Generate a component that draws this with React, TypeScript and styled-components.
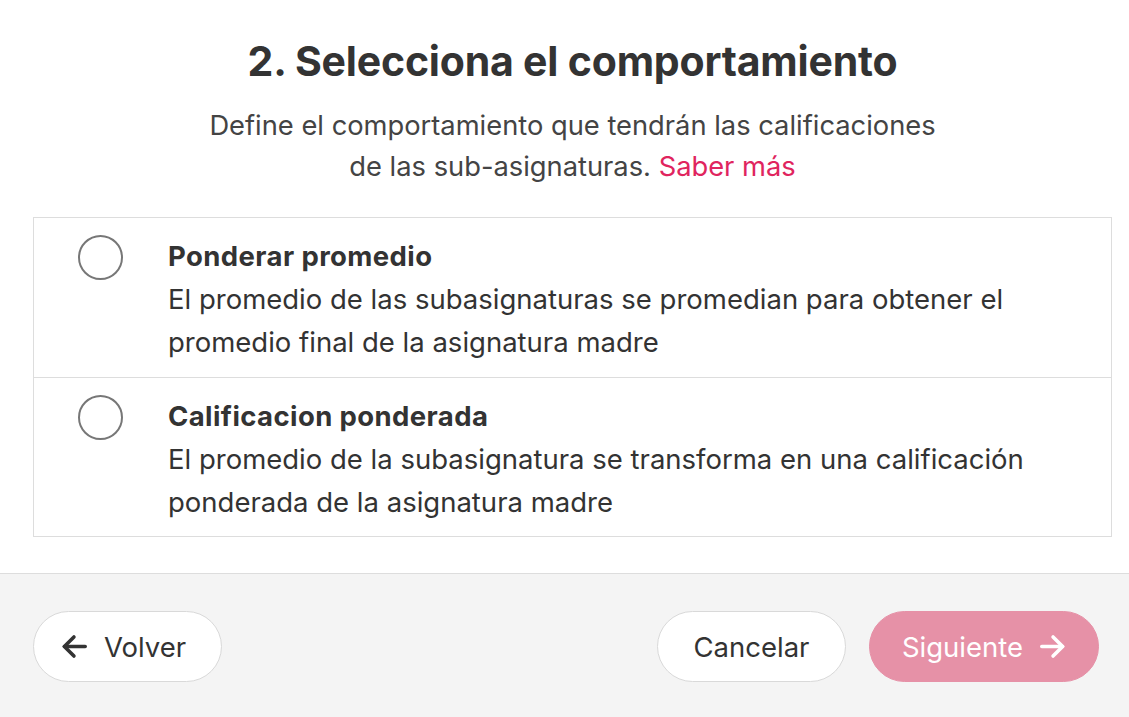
import React from "react";
import styled, { createGlobalStyle } from "styled-components";

const GlobalStyle = createGlobalStyle`
  html, body {
    margin: 0;
    padding: 0;
    background: #ffffff;
  }
  body {
    font-family: Inter, "Noto Sans", "Liberation Sans", sans-serif;
    color: #333333;
  }
`;

const Page = styled.div`
  width: 1129px;
  height: 717px;
  display: flex;
  flex-direction: column;
  background: #ffffff;
  overflow: hidden;
`;

const Content = styled.div`
  display: flex;
  flex-direction: column;
  align-items: center;
  padding: 37px 17px 0 33px;
`;

const Title = styled.h1`
  margin: 0;
  font-size: 41px;
  line-height: 48px;
  font-weight: 700;
  letter-spacing: -0.2px;
  color: #333333;
  text-align: center;
`;

const Subtitle = styled.p`
  margin: 20px 0 0;
  font-size: 27.3px;
  line-height: 41px;
  font-weight: 400;
  color: #444444;
  text-align: center;
`;

const Link = styled.a`
  color: #e0245e;
  text-decoration: none;
  cursor: pointer;
`;

const Options = styled.div`
  align-self: stretch;
  margin-top: 30px;
  border: 1px solid #dddddd;
  display: flex;
  flex-direction: column;
`;

const Option = styled.label`
  display: flex;
  align-items: flex-start;
  height: 159px;
  box-sizing: border-box;
  padding: 17px 24px 0 44px;
  cursor: pointer;
  & + & {
    border-top: 1px solid #dddddd;
  }
`;

const Radio = styled.span`
  flex: none;
  width: 45px;
  height: 45px;
  box-sizing: border-box;
  border: 2.5px solid #777777;
  border-radius: 50%;
  background: #ffffff;
`;

const OptionText = styled.div`
  margin-left: 45px;
  display: flex;
  flex-direction: column;
`;

const OptionTitle = styled.span`
  font-size: 27.5px;
  line-height: 43px;
  font-weight: 700;
  letter-spacing: 0.4px;
  color: #333333;
`;

const OptionDesc = styled.span`
  font-size: 27.5px;
  line-height: 43px;
  font-weight: 400;
  color: #333333;
`;

const Footer = styled.div`
  margin-top: auto;
  height: 144px;
  box-sizing: border-box;
  border-top: 1px solid #dddddd;
  background: #f4f4f4;
  display: flex;
  align-items: center;
  padding: 2px 30px 0 33px;
  gap: 23px;
`;

const Spacer = styled.div`
  flex: 1;
`;

const Button = styled.button<{ $primary?: boolean; $w: number }>`
  width: ${(p) => p.$w}px;
  height: 71px;
  box-sizing: border-box;
  border-radius: 36px;
  display: inline-flex;
  align-items: center;
  justify-content: center;
  gap: 16px;
  font-family: inherit;
  font-size: 27.5px;
  font-weight: 400;
  cursor: pointer;
  border: 1px solid ${(p) => (p.$primary ? "#e691a7" : "#d9d9d9")};
  background: ${(p) => (p.$primary ? "#e691a7" : "#ffffff")};
  color: ${(p) => (p.$primary ? "#ffffff" : "#333333")};
  padding: 0;
`;

const BackButton = styled(Button)`
  padding-right: 8px;
`;

const Arrow = ({ dir }: { dir: "left" | "right" }) => (
  <svg width="27" height="27" viewBox="0 0 24 24" fill="none" stroke="currentColor" strokeWidth="3.2" strokeLinecap="round" strokeLinejoin="round">
    {dir === "left" ? (
      <>
        <path d="M21.5 12H3" />
        <path d="M11.5 3.5L3 12l8.5 8.5" />
      </>
    ) : (
      <>
        <path d="M2.5 12H21" />
        <path d="M12.5 3.5L21 12l-8.5 8.5" />
      </>
    )}
  </svg>
);

const options = [
  {
    title: "Ponderar promedio",
    desc: [
      "El promedio de las subasignaturas se promedian para obtener el",
      "promedio final de la asignatura madre",
    ],
  },
  {
    title: "Calificacion ponderada",
    desc: [
      "El promedio de la subasignatura se transforma en una calificación",
      "ponderada de la asignatura madre",
    ],
  },
];

export default function App() {
  return (
    <Page>
      <GlobalStyle />
      <Content>
        <Title>2. Selecciona el comportamiento</Title>
        <Subtitle>
          Define el comportamiento que tendrán las calificaciones
          <br />
          de las sub-asignaturas. <Link>Saber más</Link>
        </Subtitle>
        <Options>
          {options.map((o) => (
            <Option key={o.title}>
              <Radio />
              <OptionText>
                <OptionTitle>{o.title}</OptionTitle>
                {o.desc.map((d) => (
                  <OptionDesc key={d}>{d}</OptionDesc>
                ))}
              </OptionText>
            </Option>
          ))}
        </Options>
      </Content>
      <Footer>
        <BackButton $w={189}>
          <Arrow dir="left" />
          Volver
        </BackButton>
        <Spacer />
        <Button $w={189}>Cancelar</Button>
        <Button $primary $w={230}>
          Siguiente
          <Arrow dir="right" />
        </Button>
      </Footer>
    </Page>
  );
}
